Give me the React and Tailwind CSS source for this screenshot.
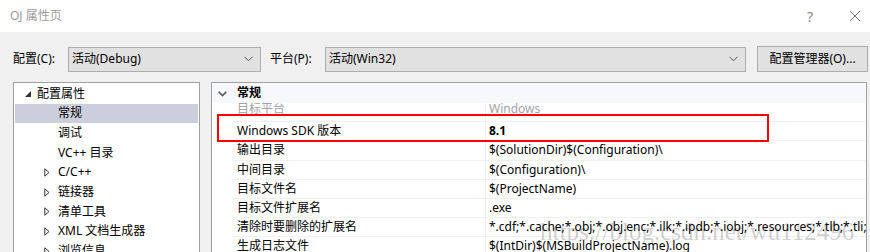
import React from 'react'

const font = { fontFamily: '"Noto Sans", "Noto Sans CJK SC", sans-serif' }

const Chevron = ({ className = '' }) => (
  <svg width="9" height="6" viewBox="0 0 9 6" className={className}>
    <path d="M0.5 0.8 L4.5 4.8 L8.5 0.8" fill="none" stroke="#555" strokeWidth="1" />
  </svg>
)

const Collapsed = () => (
  <svg width="6" height="9" viewBox="0 0 6 9" className="shrink-0">
    <path d="M0.8 0.8 L5 4.5 L0.8 8.2 Z" fill="none" stroke="#333" strokeWidth="1" />
  </svg>
)

const Expanded = () => (
  <svg width="6" height="6" viewBox="0 0 6 6" className="shrink-0">
    <path d="M6 0 L6 6 L0 6 Z" fill="#333" />
  </svg>
)

const treeItems = [
  { label: '常规', selected: true },
  { label: '调试' },
  { label: 'VC++ 目录' },
  { label: 'C/C++', arrow: true },
  { label: '链接器', arrow: true },
  { label: '清单工具', arrow: true },
  { label: 'XML 文档生成器', arrow: true },
  { label: '浏览信息', arrow: true },
  { label: '生成事件', arrow: true }
]

const props = [
  { name: '输出目录', value: '$(SolutionDir)$(Configuration)\\' },
  { name: '中间目录', value: '$(Configuration)\\' },
  { name: '目标文件名', value: '$(ProjectName)' },
  { name: '目标文件扩展名', value: '.exe' },
  { name: '清除时要删除的扩展名', value: '*.cdf;*.cache;*.obj;*.obj.enc;*.ilk;*.ipdb;*.iobj;*.resources;*.tlb;*.tli;*.tlh;*.tmp;*.rsp' },
  { name: '生成日志文件', value: '$(IntDir)$(MSBuildProjectName).log' },
  { name: '平台工具集', value: 'Visual Studio 2017 (v141)' }
]

const Select = ({ text, width }) => (
  <div className={`${width} h-[25px] border border-[#adadad] bg-[#e1e1e1] flex items-center pl-[3px] pr-[7px]`}>
    <span className="flex-1 text-[12px] text-black whitespace-nowrap">{text}</span>
    <Chevron />
  </div>
)

export default function App() {
  return (
    <div className="w-[870px] h-[252px] overflow-hidden bg-[#f0f0f0] relative text-black" style={font}>
      <div className="h-[32px] bg-white flex items-center pl-[10px] pr-[9px] text-[12px]">
        <span className="flex-1 text-[#9a9a9a]">OJ 属性页</span>
        <span className="text-[#8a8a8a] text-[14px] mr-[36px]">?</span>
        <svg width="12" height="12" viewBox="0 0 12 12">
          <path d="M1 1 L11 11 M11 1 L1 11" stroke="#777" strokeWidth="1" />
        </svg>
      </div>

      <div className="flex items-center pt-[14px] pl-[13px] text-[12px]">
        <span className="w-[55px]">配置(C):</span>
        <Select text="活动(Debug)" width="w-[193px]" />
        <span className="ml-[9px] w-[55px]">平台(P):</span>
        <Select text="活动(Win32)" width="w-[421px]" />
        <div className="ml-[11px] w-[111px] h-[26px] border border-[#adadad] bg-[#e1e1e1] flex items-center justify-center whitespace-nowrap">
          配置管理器(O)...
        </div>
      </div>

      <div className="flex pt-[10px] pl-[13px] gap-[11px] text-[12px]">
        <div className="w-[187px] h-[200px] border border-[#a0a0a0] bg-white p-[1px]">
          <div className="h-[19.67px] flex items-center pl-[10px] gap-[6px]">
            <Expanded />
            <span>配置属性</span>
          </div>
          {treeItems.map((it) => (
            <div
              key={it.label}
              className={`h-[19.67px] flex items-center ${it.selected ? 'bg-[#cccedb]' : ''}`}
            >
              <div className="w-[43px] flex justify-end pr-[8px]">{it.arrow && <Collapsed />}</div>
              <span className="whitespace-nowrap">{it.label}</span>
            </div>
          ))}
        </div>

        <div className="w-[656px] h-[200px] border border-[#a0a0a0] bg-white">
          <div className="h-[20px] flex items-center bg-[#f6f8fb] pl-[6px]">
            <svg width="9" height="6" viewBox="0 0 9 6" className="mt-[1px]">
              <path d="M0.7 0.7 L4.5 4.5 L8.3 0.7" fill="none" stroke="#555" strokeWidth="1.6" />
            </svg>
            <span className="ml-[10px] font-bold">常规</span>
          </div>
          <div className="h-[19.2px] flex pl-[21px]">
            <div className="w-[253px] border-b border-[#f0f0f0] border-r flex items-center pl-[4px] text-[#a3a3a3] overflow-hidden">
              <span className="-mt-[6px]">目标平台</span>
            </div>
            <div className="flex-1 border-b border-[#f0f0f0] flex items-center pl-[3px] text-[#a3a3a3] overflow-hidden">
              <span className="-mt-[6px]">Windows</span>
            </div>
          </div>
          <div className="h-[19.2px] flex pl-[21px]">
            <div className="w-[253px] border-b border-r border-[#f0f0f0] flex items-center pl-[4px]">
              Windows SDK 版本
            </div>
            <div className="flex-1 border-b border-[#f0f0f0] flex items-center pl-[3px] font-bold">8.1</div>
          </div>
          {props.map((p) => (
            <div key={p.name} className="h-[19.2px] flex pl-[21px]">
              <div className="w-[253px] shrink-0 border-b border-r border-[#f0f0f0] flex items-center pl-[4px] whitespace-nowrap">
                {p.name}
              </div>
              <div className="flex-1 min-w-0 border-b border-[#f0f0f0] flex items-center pl-[3px] whitespace-nowrap overflow-hidden">
                {p.value}
              </div>
            </div>
          ))}
        </div>
      </div>

      <div className="absolute left-[217px] top-[114px] w-[552px] h-[28px] border-2 border-[#ff0000]" />

      <div
        className="absolute left-[540px] top-[213px] text-[25px] text-black/20 whitespace-nowrap pointer-events-none"
        style={{ fontFamily: '"Liberation Serif", serif' }}
      >
        https://blog.csdn.net/wu112496
      </div>
    </div>
  )
}
